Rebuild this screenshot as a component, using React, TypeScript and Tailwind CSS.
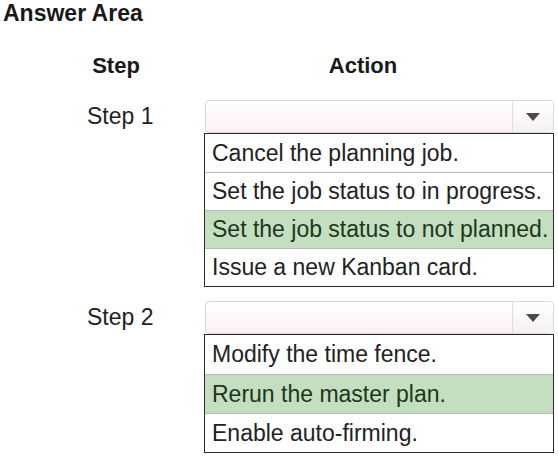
const stepOneOptions = [
  { label: 'Cancel the planning job.', picked: false },
  { label: 'Set the job status to in progress.', picked: false },
  { label: 'Set the job status to not planned.', picked: true },
  { label: 'Issue a new Kanban card.', picked: false },
];

const stepTwoOptions = [
  { label: 'Modify the time fence.', picked: false },
  { label: 'Rerun the master plan.', picked: true },
  { label: 'Enable auto-firming.', picked: false },
];

type Option = { label: string; picked: boolean };

const Select = () => (
  <div className="ml-px flex h-[33px] w-[349px] overflow-hidden rounded-[4px] border border-[#d8d8d8] bg-gradient-to-b from-[#ffffff] to-[#fbf1f2]">
    <div className="flex-1" />
    <div className="flex w-[41px] items-center justify-center border-l border-[#dedede] bg-gradient-to-b from-[#ffffff] to-[#f7f1f1]">
      <svg width="14" height="8" viewBox="0 0 14 8">
        <path d="M0 0 H14 L7 8 Z" fill="#4a4a4a" />
      </svg>
    </div>
  </div>
);

const OptionList = ({ options, rowClass }: { options: Option[]; rowClass: string }) => (
  <div className="w-[350px] border-[1.5px] border-[#2b2b2b] bg-white">
    {options.map((opt, i) => (
      <div
        key={opt.label}
        className={`${rowClass} flex items-center pl-[7px] text-[23px] leading-none ${
          i > 0 ? 'border-t border-[#b9b9b9]' : ''
        } ${opt.picked ? 'bg-[#c4dfbf] text-[#1c361c]' : 'text-[#222222]'}`}
      >
        {opt.label}
      </div>
    ))}
  </div>
);

const StepBlock = ({ step, options, rowClass }: { step: string; options: Option[]; rowClass: string }) => (
  <div className="flex">
    <div className="flex h-[33px] w-[204px] items-center pl-[87px] text-[23px] leading-none text-[#222222]">
      {step}
    </div>
    <div className="flex flex-col">
      <Select />
      <OptionList options={options} rowClass={rowClass} />
    </div>
  </div>
);

export default function App() {
  return (
    <div className="h-[458px] w-[558px] overflow-hidden bg-white font-['Liberation_Sans',Arial,sans-serif]">
      <div className="pl-[3px] text-[23px] font-bold leading-[26px] text-[#1a1a1a]">Answer Area</div>

      <div className="mt-[29px] flex text-[22px] font-bold leading-none text-[#1a1a1a]">
        <div className="w-[232px] text-center">Step</div>
        <div className="w-[262px] text-center">Action</div>
      </div>

      <div className="mt-[23px]">
        <StepBlock step="Step 1" options={stepOneOptions} rowClass="h-[38px]" />
      </div>

      <div className="mt-[14px]">
        <StepBlock step="Step 2" options={stepTwoOptions} rowClass="h-[39px]" />
      </div>
    </div>
  );
}
